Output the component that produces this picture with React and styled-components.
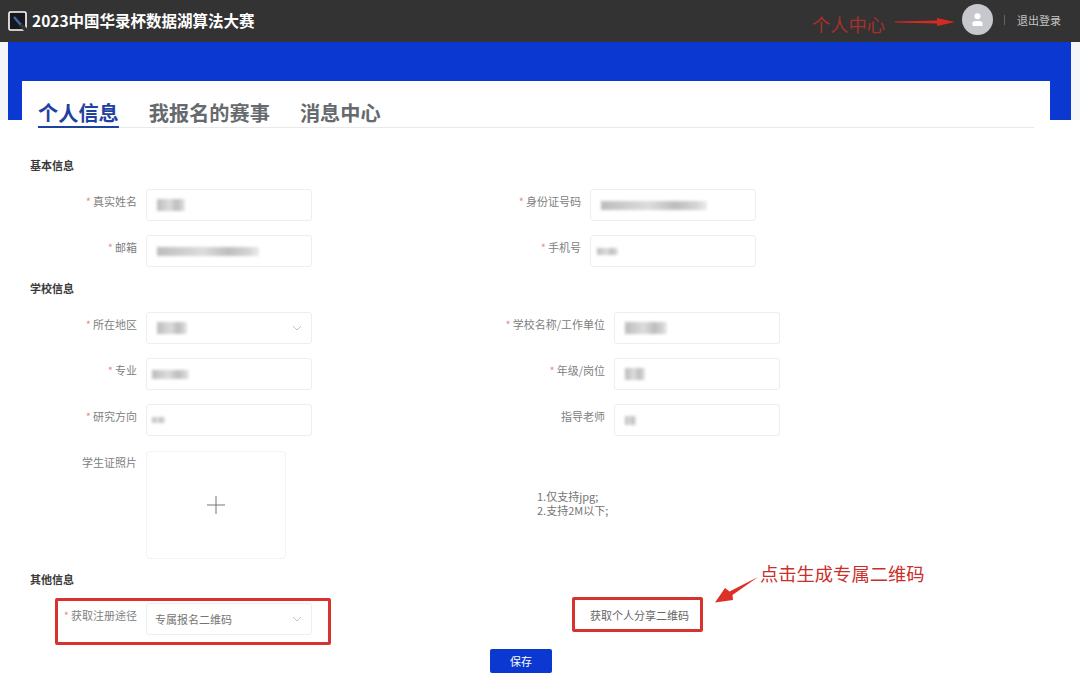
import React from "react";
import styled, { createGlobalStyle } from "styled-components";

const GlobalStyle = createGlobalStyle`
  html, body {
    margin: 0;
    background: #fff;
    font-family: "Noto Sans CJK SC", "Liberation Sans", sans-serif;
  }
`;

const Page = styled.div`
  position: relative;
  width: 1080px;
  height: 691px;
  overflow: hidden;
  background: #fff;
`;

const TopBar = styled.header`
  display: flex;
  align-items: center;
  height: 42px;
  padding: 0 19px 0 8px;
  box-sizing: border-box;
  background: #333333;
`;

const Logo = styled.svg`
  width: 19px;
  height: 20px;
  margin-right: 5px;
`;

const Title = styled.h1`
  margin: 0 0 3px;
  font-size: 15.5px;
  line-height: 20px;
  font-weight: 700;
  color: #fff;
`;

const Account = styled.div`
  display: flex;
  align-items: center;
  margin-left: auto;
  margin-bottom: 3px;
`;

const Avatar = styled.div`
  display: flex;
  align-items: center;
  justify-content: center;
  width: 31px;
  height: 31px;
  border-radius: 50%;
  background: #c6c8cd;
`;

const Divider = styled.span`
  width: 1px;
  height: 10px;
  margin: 0 12px 0 11px;
  background: #666;
`;

const Logout = styled.span`
  font-size: 11px;
  line-height: 16px;
  color: #c4c4c4;
`;

const BannerStrip = styled.div`
  height: 78px;
  padding: 0 9px 0 8px;
  background: #f5f6f8;
`;

const Banner = styled.div`
  height: 100%;
  background: #0a38d0;
`;

const Card = styled.main`
  position: relative;
  width: 1028px;
  margin: -39px 0 0 22px;
  background: #fff;
`;

const Tabs = styled.nav`
  display: flex;
  align-items: flex-end;
  gap: 30px;
  height: 46px;
  margin: 0 16px;
  border-bottom: 1px solid #e8e9eb;
`;

const Tab = styled.a`
  margin-bottom: -1px;
  padding: 0 0 1px;
  border-bottom: 2px solid ${(p) => (p.$active ? "#1f419f" : "transparent")};
  font-size: 20.2px;
  line-height: 24px;
  font-weight: 700;
  color: ${(p) => (p.$active ? "#1f419f" : "#666a6e")};
`;

const Form = styled.div`
  padding: 0 8px;
`;

const SectionTitle = styled.h2`
  margin: ${(p) => p.$top}px 0 ${(p) => p.$bottom}px;
  font-size: 11px;
  line-height: 16px;
  font-weight: 700;
  color: #3a3a3a;
`;

const Rows = styled.div`
  display: grid;
  grid-template-columns: 445px 1fr;
  row-gap: 14px;
`;

const Field = styled.div`
  display: flex;
  align-items: flex-start;
`;

const Label = styled.label`
  flex: none;
  width: ${(p) => p.$width}px;
  margin-right: 9px;
  font-size: 11px;
  line-height: 24px;
  text-align: right;
  color: #808080;
`;

const Star = styled.span`
  margin-right: 2px;
  color: #e58f8f;
`;

const InputBox = styled.div`
  display: flex;
  align-items: center;
  justify-content: space-between;
  width: 166px;
  height: 32px;
  padding: 0 9px 0 ${(p) => p.$pad ?? 10}px;
  box-sizing: border-box;
  border: 1px solid #eeeeee;
  border-radius: 3px;
  background: #fff;
  font-size: 11px;
  color: #757575;
`;

const Smudge = styled.span`
  display: block;
  width: ${(p) => p.$w}px;
  height: ${(p) => p.$h ?? 9}px;
  background: linear-gradient(90deg, #bcbcbc, #dcdcdc 45%, #bdbdbd 70%, #d4d4d4 90%, #ececec);
  filter: blur(1.8px);
`;

const Chevron = styled.svg`
  width: 10px;
  height: 10px;
  margin-left: auto;
  fill: none;
  stroke: #c4c4c4;
  stroke-width: 1;
`;

const UploadBox = styled.div`
  display: flex;
  align-items: center;
  justify-content: center;
  width: 140px;
  height: 108px;
  margin-top: 1px;
  border: 1px solid #f3f3f3;
  border-radius: 4px;
  box-sizing: border-box;
`;

const Hint = styled.div`
  align-self: center;
  margin-bottom: 4px;
  padding-left: 62px;
  font-size: 11px;
  line-height: 14px;
  color: #757575;
`;

const ShareLink = styled.div`
  padding-left: 115px;
  font-size: 11px;
  line-height: 24px;
  color: #666;
`;

const SaveButton = styled.button`
  display: block;
  width: 62px;
  height: 24px;
  margin: 14px 0 0 460px;
  padding: 0;
  border: 0;
  border-radius: 2px;
  background: #0b38d0;
  font-family: inherit;
  font-size: 11px;
  color: #fff;
`;

/* the red marks somebody drew over the screenshot */
const RedBox = styled.div`
  position: absolute;
  left: ${(p) => p.$x}px;
  top: ${(p) => p.$y}px;
  width: ${(p) => p.$w}px;
  height: ${(p) => p.$h}px;
  box-sizing: border-box;
  border: 3px solid #d8322f;
  border-radius: 2px;
`;

const RedNote = styled.span`
  position: absolute;
  left: ${(p) => p.$x}px;
  top: ${(p) => p.$y}px;
  font-size: 18.3px;
  line-height: 24px;
  white-space: nowrap;
  color: ${(p) => p.$color};
`;

const RedArrow = styled.svg`
  position: absolute;
  left: ${(p) => p.$x}px;
  top: ${(p) => p.$y}px;
`;

const Caret = () => (
  <Chevron viewBox="0 0 10 10">
    <path d="M1 3 L5 7 L9 3" />
  </Chevron>
);

const Required = ({ width, children }) => (
  <Label $width={width}>
    <Star>*</Star>
    {children}
  </Label>
);

const App = () => {
  return (
    <Page>
      <GlobalStyle />
      <TopBar>
        <Logo viewBox="0 0 19 20">
          <rect x="1" y="1" width="17" height="18" rx="1.5" fill="#15181e" stroke="#fff" strokeWidth="1.6" />
          <path d="M12 13 L19 20" stroke="#333" strokeWidth="4" />
          <path d="M6 6 L12.5 13.5" stroke="#3f6aa8" strokeWidth="2.4" />
        </Logo>
        <Title>2023中国华录杯数据湖算法大赛</Title>
        <Account>
          <Avatar>
            <svg width="11" height="13" viewBox="0 0 11 13" fill="#fff">
              <circle cx="5.5" cy="3.2" r="3" />
              <path d="M0.5 13 V9.6 C0.5 8.6 2 8 5.5 8 C9 8 10.5 8.6 10.5 9.6 V13 Z" />
            </svg>
          </Avatar>
          <Divider />
          <Logout>退出登录</Logout>
        </Account>
      </TopBar>

      <BannerStrip>
        <Banner />
      </BannerStrip>

      <Card>
        <Tabs>
          <Tab $active>个人信息</Tab>
          <Tab>我报名的赛事</Tab>
          <Tab>消息中心</Tab>
        </Tabs>

        <Form>
          <SectionTitle $top={29} $bottom={16}>基本信息</SectionTitle>
          <Rows>
            <Field>
              <Required width={107}>真实姓名</Required>
              <InputBox><Smudge $w={28} $h={12} /></InputBox>
            </Field>
            <Field>
              <Required width={106}>身份证号码</Required>
              <InputBox><Smudge $w={106} /></InputBox>
            </Field>
            <Field>
              <Required width={107}>邮箱</Required>
              <InputBox><Smudge $w={102} /></InputBox>
            </Field>
            <Field>
              <Required width={106}>手机号</Required>
              <InputBox $pad={6}><Smudge $w={21} $h={7} /></InputBox>
            </Field>
          </Rows>

          <SectionTitle $top={13} $bottom={16}>学校信息</SectionTitle>
          <Rows>
            <Field>
              <Required width={107}>所在地区</Required>
              <InputBox><Smudge $w={30} $h={12} /><Caret /></InputBox>
            </Field>
            <Field>
              <Required width={130}>学校名称/工作单位</Required>
              <InputBox><Smudge $w={42} $h={12} /></InputBox>
            </Field>
            <Field>
              <Required width={107}>专业</Required>
              <InputBox $pad={5}><Smudge $w={37} $h={9} /></InputBox>
            </Field>
            <Field>
              <Required width={130}>年级/岗位</Required>
              <InputBox><Smudge $w={20} $h={12} /></InputBox>
            </Field>
            <Field>
              <Required width={107}>研究方向</Required>
              <InputBox $pad={5}><Smudge $w={13} $h={6} /></InputBox>
            </Field>
            <Field>
              <Label $width={130}>指导老师</Label>
              <InputBox><Smudge $w={11} $h={9} /></InputBox>
            </Field>
            <Field>
              <Label $width={107}>学生证照片</Label>
              <UploadBox>
                <svg width="18" height="18" viewBox="0 0 18 18" stroke="#777" strokeWidth="1">
                  <path d="M0 9 H18 M9 0 V18" />
                </svg>
              </UploadBox>
            </Field>
            <Hint>
              1.仅支持jpg;
              <br />
              2.支持2M以下;
            </Hint>
          </Rows>

          <SectionTitle $top={12} $bottom={16}>其他信息</SectionTitle>
          <Rows>
            <Field>
              <Required width={107}>获取注册途径</Required>
              <InputBox $pad={8}>专属报名二维码<Caret /></InputBox>
            </Field>
            <ShareLink>获取个人分享二维码</ShareLink>
          </Rows>

          <SaveButton>保存</SaveButton>
        </Form>
      </Card>

      <RedNote $x={812} $y={12} $color="#a8302c">个人中心</RedNote>
      <RedArrow $x={895} $y={16} width="62" height="12" viewBox="0 0 62 12">
        <path d="M0 5.4 L42 4.6 L42 2 L60 6 L42 10 L42 7.4 L0 6.6 Z" fill="#d42a20" />
      </RedArrow>
      <RedBox $x={55} $y={598} $w={276} $h={47} />
      <RedBox $x={572} $y={597} $w={131} $h={35} />
      <RedNote $x={760} $y={561} $color="#c9302c">点击生成专属二维码</RedNote>
      <RedArrow $x={712} $y={574} width="48" height="32" viewBox="0 0 48 32">
        <path d="M46 3 L20.5 21 L21 26 L3 28.5 L13 14 L17.5 17.5 Z" fill="#dc3028" />
      </RedArrow>
    </Page>
  );
};

export default App;
